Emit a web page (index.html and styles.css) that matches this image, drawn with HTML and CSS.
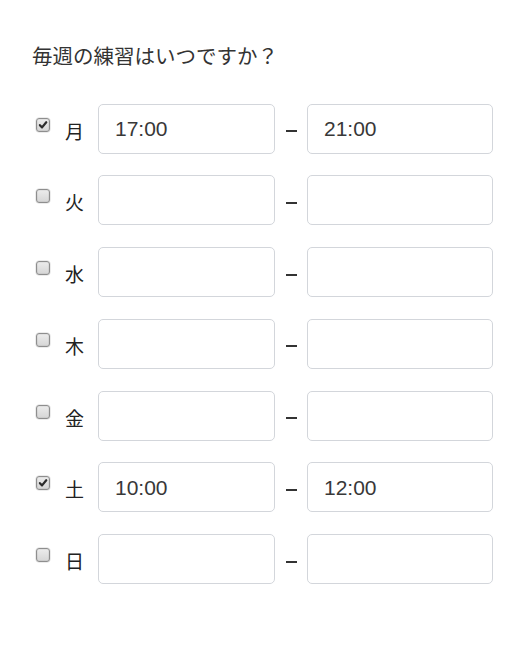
FILE: index.html
```html
<!DOCTYPE html>
<html lang="ja">
<head>
<meta charset="utf-8">
<link rel="stylesheet" href="styles.css">
</head>
<body>
<div class="form">
  <div class="title">毎週の練習はいつですか？</div>
  <div class="rows">
    <div class="row">
      <span class="cb checked"><svg viewBox="0 0 14 14"><path d="M3.4 7.2 L5.9 9.8 L10.8 3.8" /></svg></span>
      <span class="day">月</span>
      <div class="inp a">17:00</div>
      <span class="dash"></span>
      <div class="inp b">21:00</div>
    </div>
    <div class="row">
      <span class="cb"></span>
      <span class="day">火</span>
      <div class="inp a"></div>
      <span class="dash"></span>
      <div class="inp b"></div>
    </div>
    <div class="row">
      <span class="cb"></span>
      <span class="day">水</span>
      <div class="inp a"></div>
      <span class="dash"></span>
      <div class="inp b"></div>
    </div>
    <div class="row">
      <span class="cb"></span>
      <span class="day">木</span>
      <div class="inp a"></div>
      <span class="dash"></span>
      <div class="inp b"></div>
    </div>
    <div class="row">
      <span class="cb"></span>
      <span class="day">金</span>
      <div class="inp a"></div>
      <span class="dash"></span>
      <div class="inp b"></div>
    </div>
    <div class="row">
      <span class="cb checked"><svg viewBox="0 0 14 14"><path d="M3.4 7.2 L5.9 9.8 L10.8 3.8" /></svg></span>
      <span class="day">土</span>
      <div class="inp a">10:00</div>
      <span class="dash"></span>
      <div class="inp b">12:00</div>
    </div>
    <div class="row">
      <span class="cb"></span>
      <span class="day">日</span>
      <div class="inp a"></div>
      <span class="dash"></span>
      <div class="inp b"></div>
    </div>
  </div>
</div>
</body>
</html>
```

FILE: styles.css
```css
html, body {
  margin: 0;
  padding: 0;
  background: #fff;
}
body {
  font-family: "Liberation Sans", "Noto Sans CJK JP", sans-serif;
  color: #333;
}
.form {
  padding: 40px 0 0 32px;
}
.title {
  font-family: "Noto Sans CJK JP", sans-serif;
  font-size: 20.5px;
  line-height: 30px;
  height: 30px;
  color: #333;
  margin-bottom: 33.5px;
}
.rows {
  display: flex;
  flex-direction: column;
  gap: 21.75px;
}
.row {
  display: flex;
  align-items: center;
  height: 50px;
}
.cb {
  box-sizing: border-box;
  width: 14px;
  height: 14px;
  margin-left: 4px;
  margin-right: -1px;
  margin-top: -8px;
  border: 1px solid #8e8e8e;
  border-radius: 3px;
  background: linear-gradient(#ececec, #d6d6d6);
  box-shadow: 0 0 0 0.5px rgba(0, 0, 0, 0.15), inset 0 0 0 0.5px rgba(0, 0, 0, 0.1);
  display: flex;
  align-items: center;
  justify-content: center;
}
.cb svg {
  width: 12px;
  height: 12px;
  fill: none;
  stroke: #2c2c2c;
  stroke-width: 2.6;
  stroke-linecap: round;
  stroke-linejoin: round;
}
.day {
  font-family: "Noto Sans CJK JP", sans-serif;
  font-size: 19px;
  line-height: 24px;
  width: 19px;
  margin-left: 16px;
  margin-top: 4px;
  color: #222;
}
.inp {
  box-sizing: border-box;
  height: 50px;
  border: 1px solid #d3d6db;
  border-radius: 5px;
  padding-left: 16px;
  display: flex;
  align-items: center;
  font-size: 21px;
  color: #383838;
  padding-top: 1px;
}
.inp.a {
  width: 177px;
  margin-left: 14px;
}
.inp.b {
  width: 186px;
}
.dash {
  width: 32px;
  display: flex;
  justify-content: center;
  padding-top: 5px;
}
.dash::before {
  content: "";
  display: block;
  width: 11px;
  height: 2px;
  background: #333;
}
```
